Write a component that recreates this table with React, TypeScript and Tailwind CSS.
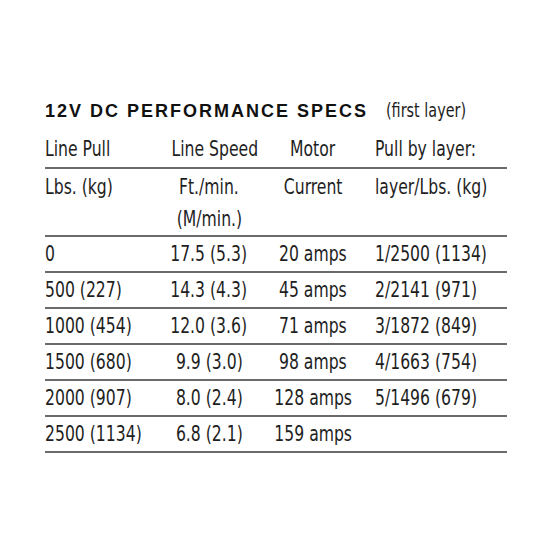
import React from "react";

const narrow = "font-['Liberation_Sans_Narrow','DejaVu_Sans_Condensed','DejaVu_Sans',sans-serif] [font-stretch:condensed]";

const rows: [string, string, string, string][] = [
  ["0", "17.5 (5.3)", "20 amps", "1/2500 (1134)"],
  ["500 (227)", "14.3 (4.3)", "45 amps", "2/2141 (971)"],
  ["1000 (454)", "12.0 (3.6)", "71 amps", "3/1872 (849)"],
  ["1500 (680)", "9.9 (3.0)", "98 amps", "4/1663 (754)"],
  ["2000 (907)", "8.0 (2.4)", "128 amps", "5/1496 (679)"],
  ["2500 (1134)", "6.8 (2.1)", "159 amps", ""],
];

const grid = "grid grid-cols-[115px_98px_110px_139px] border-b-2 border-[#6a6a6a]";

function L({ children }: { children: React.ReactNode }) {
  return (
    <div className="whitespace-nowrap">
      <span className="inline-block scale-x-[0.79] origin-left">{children}</span>
    </div>
  );
}

function C({ children }: { children: React.ReactNode }) {
  return (
    <div className="whitespace-nowrap text-center">
      <span className="inline-block scale-x-[0.79] origin-center">{children}</span>
    </div>
  );
}

export default function App() {
  return (
    <div className="w-[550px] h-[550px] bg-white text-[#1e1e1e] pt-[98px] pl-[45px]">
      <div className="flex items-baseline h-[24px] leading-[24px] whitespace-nowrap">
        <span className="font-['Liberation_Sans',Arial,sans-serif] font-bold text-[18px] tracking-[2px] text-[#111]">
          12V DC PERFORMANCE SPECS
        </span>
        <span className={`${narrow} text-[20px] ml-[18px] inline-block scale-x-[0.8] origin-left`}>
          (first layer)
        </span>
      </div>
      <div className={`${narrow} text-[22px] mt-[14px] w-[462px]`}>
        <div className={`${grid} leading-[26px] pb-[5px]`}>
          <L>Line Pull</L>
          <C>Line Speed</C>
          <C>Motor</C>
          <div className="pl-[7px]">
            <L>Pull by layer:</L>
          </div>
        </div>
        <div className={`${grid} leading-[32px] pt-[2px]`}>
          <L>Lbs. (kg)</L>
          <div>
            <C>Ft./min.</C>
            <C>(M/min.)</C>
          </div>
          <C>Current</C>
          <div className="pl-[7px]">
            <L>layer/Lbs. (kg)</L>
          </div>
        </div>
        {rows.map((r, i) => (
          <div key={i} className={`${grid} leading-[34px]`}>
            <L>{r[0]}</L>
            <C>{r[1]}</C>
            <C>{r[2]}</C>
            <div className="pl-[7px]">
              <L>{r[3] || "\u00a0"}</L>
            </div>
          </div>
        ))}
      </div>
    </div>
  );
}
